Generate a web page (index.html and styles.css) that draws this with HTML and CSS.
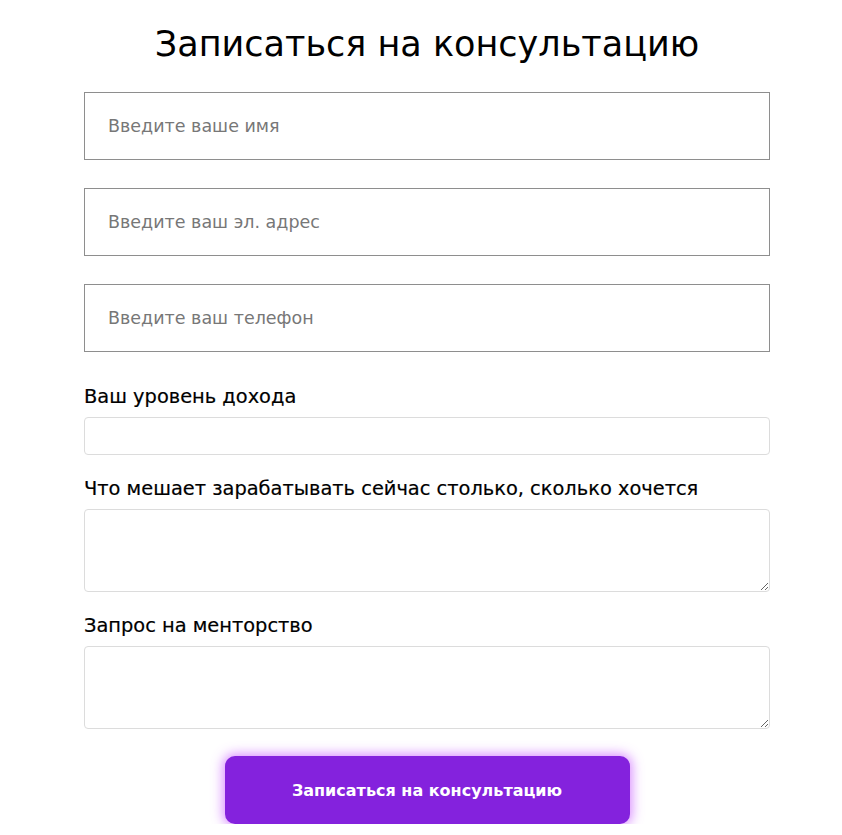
FILE: index.html
```html
<!DOCTYPE html>
<html lang="ru">
<head>
  <meta charset="UTF-8" />
  <meta name="viewport" content="width=device-width, initial-scale=1.0"/>
  <title>Записаться на консультацию</title>
  <link rel="stylesheet" href="styles.css">
</head>
<body>
  <div class="wrap">
    <h1 class="title">Записаться на консультацию</h1>
    <form class="form">
      <input class="field" type="text" placeholder="Введите ваше имя">
      <input class="field" type="email" placeholder="Введите ваш эл. адрес">
      <input class="field" type="tel" placeholder="Введите ваш телефон">

      <label class="label">Ваш уровень дохода</label>
      <input class="small" type="text">

      <label class="label">Что мешает зарабатывать сейчас столько, сколько хочется</label>
      <textarea class="area"></textarea>

      <label class="label">Запрос на менторство</label>
      <textarea class="area"></textarea>

      <button class="btn" type="button">Записаться на консультацию</button>
    </form>
  </div>
</body>
</html>
```
FILE: styles.css
```css
body {
    margin: 0;
    background: #ffffff;
    font-family: 'DejaVu Sans', sans-serif;
    color: #000;
}
.wrap {
    width: 686px;
    margin-left: 84px;
}
.title {
    margin: 22px 0 0;
    height: 70px;
    font-size: 35px;
    font-weight: 400;
    text-align: center;
    line-height: 44px;
}
.form {
    display: flex;
    flex-direction: column;
}
.field {
    height: 68px;
    box-sizing: border-box;
    border: 1px solid #8e8e8e;
    padding: 0 23px;
    margin-bottom: 28px;
    font-family: inherit;
    font-size: 17.5px;
    outline: none;
}
.field::placeholder {
    color: #777;
}
.label {
    font-size: 19.4px;
    line-height: 24px;
    margin: 5px 0 8px;
    -webkit-text-stroke: 0.2px #000;
}
.small {
    height: 38px;
    box-sizing: border-box;
    border: 1px solid #dcdcdc;
    border-radius: 4px;
    margin-bottom: 17px;
}
.area {
    height: 83px;
    box-sizing: border-box;
    border: 1px solid #dcdcdc;
    border-radius: 4px;
    margin-bottom: 17px;
    resize: vertical;
}
.btn {
    align-self: center;
    width: 405px;
    height: 68px;
    margin-top: 10px;
    border: none;
    border-radius: 10px;
    background: #8422dd;
    color: #fff;
    font-family: inherit;
    font-size: 16px;
    font-weight: bold;
    box-shadow: 0 0 12px 2px rgba(200, 90, 255, 0.7);
}
```
